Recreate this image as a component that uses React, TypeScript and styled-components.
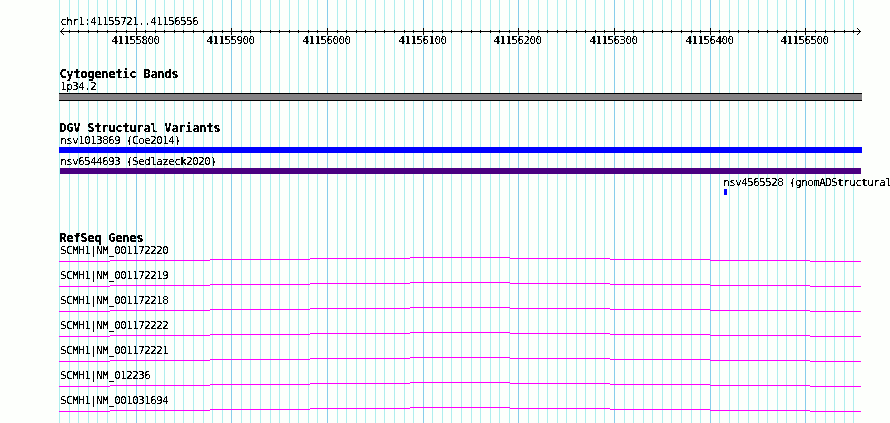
import React from "react";
import styled, { createGlobalStyle, css } from "styled-components";

const REGION_START = 41155721;
const REGION_END = 41156556;
const PAD_LEFT = 60;
const PIXELS_PER_BASE = 800 / (REGION_END - REGION_START + 1);

const toX = (position: number) =>
  Math.round(PAD_LEFT + (position - REGION_START) * PIXELS_PER_BASE);

const ticks: { position: number; x: number; major: boolean }[] = [];
for (let p = 41155720; p <= 41156550; p += 10) {
  ticks.push({ position: p, x: toX(p), major: p % 100 === 0 });
}

const genes = [
  "SCMH1|NM_001172220",
  "SCMH1|NM_001172219",
  "SCMH1|NM_001172218",
  "SCMH1|NM_001172222",
  "SCMH1|NM_001172221",
  "SCMH1|NM_012236",
  "SCMH1|NM_001031694",
];

// x, width and height offset of every piece of the intron arc
const arcSteps = [
  [0, 51, 4],
  [51, 100, 3],
  [151, 100, 2],
  [251, 100, 1],
  [351, 100, 0],
  [451, 100, 1],
  [551, 100, 2],
  [651, 100, 3],
  [751, 51, 4],
];

const GlobalStyle = createGlobalStyle`
  body {
    margin: 0;
    background: #fdfffc;
    overflow: hidden;
  }
`;

const smallFont = css`
  font-family: "DejaVu Sans Mono", monospace;
  font-size: 10.8px;
  letter-spacing: -0.502px;
  filter: url(#crisp);
`;

const Browser = styled.main`
  position: relative;
  box-sizing: border-box;
  width: 890px;
  height: 423px;
  padding: 15px 0 0 59px;
  overflow: hidden;
  background: #fdfffc;
  color: #000;
`;

const Grid = styled.svg`
  position: absolute;
  top: 0;
  left: 0;
`;

const Content = styled.div`
  position: relative;
`;

const Label = styled.div<{ $indent?: number }>`
  ${smallFont}
  height: 13px;
  line-height: 13px;
  padding-left: ${(props) => props.$indent ?? 1.25}px;
  white-space: pre;
`;

const Ruler = styled.svg`
  display: block;
  width: 831px;
  height: 19px;

  text {
    ${smallFont}
  }
`;

const Track = styled.section<{ $gap: number }>`
  margin-top: ${(props) => props.$gap}px;
`;

const TrackTitle = styled.h2`
  height: 12px;
  margin: 0;
  padding-left: 0.5px;
  font-family: "DejaVu Sans Mono", monospace;
  font-size: 11.6px;
  font-weight: 700;
  line-height: 13px;
  letter-spacing: 0.016px;
  white-space: pre;
  filter: url(#crisp);
`;

const Band = styled.div`
  box-sizing: border-box;
  width: 803px;
  height: 8px;
  border: solid #000;
  border-width: 1px 0;
  background: #848284;
`;

const Feature = styled.div`
  height: 21px;
`;

const Bar = styled.div<{ $color: string; $width: number; $indent?: number }>`
  width: ${(props) => props.$width}px;
  height: 6px;
  margin-left: ${(props) => props.$indent ?? 0}px;
  background: ${(props) => props.$color};
`;

const Gene = styled.div`
  height: 25px;
`;

const Arc = styled.svg`
  display: block;
  width: 802px;
  height: 5px;
`;

const FilterDefs = styled.svg`
  position: absolute;
`;

// hard glyph edges, like a bitmap font
const CrispFilter = () => (
  <FilterDefs width="0" height="0">
    <filter id="crisp" x="0" y="-20%" width="100%" height="140%">
      <feComponentTransfer>
        <feFuncA type="discrete" tableValues="0 0 1 1 1" />
      </feComponentTransfer>
    </filter>
  </FilterDefs>
);

const App = () => {
  return (
    <Browser>
      <GlobalStyle />
      <CrispFilter />
      <Grid width="890" height="423" shapeRendering="crispEdges">
        {ticks.map((tick) => (
          <rect
            key={tick.position}
            x={tick.x}
            width="1"
            height="423"
            fill={tick.major ? "#87ceeb" : "#afeeee"}
          />
        ))}
      </Grid>
      <Content>
        <Label>chr1:41155721..41156556</Label>
        <Ruler viewBox="59 28 831 19">
          <g shapeRendering="crispEdges">
            <rect x="60" y="31" width="801" height="1" />
            {ticks.slice(1).map((tick) => (
              <rect
                key={tick.position}
                x={tick.x}
                y={tick.major ? 28 : 30}
                width="1"
                height={tick.major ? 7 : 3}
              />
            ))}
            {[1, 2, 3].map((n) => (
              <React.Fragment key={n}>
                <rect x={60 + n} y={31 - n} width="1" height="1" />
                <rect x={60 + n} y={31 + n} width="1" height="1" />
                <rect x={860 - n} y={31 - n} width="1" height="1" />
                <rect x={860 - n} y={31 + n} width="1" height="1" />
              </React.Fragment>
            ))}
          </g>
          {ticks
            .filter((tick) => tick.major)
            .map((tick) => (
              <text key={tick.position} x={tick.x - 24.5} y="44">
                {tick.position}
              </text>
            ))}
        </Ruler>
        <Track $gap={21}>
          <TrackTitle>Cytogenetic Bands</TrackTitle>
          <Label>1p34.2</Label>
          <Band />
        </Track>
        <Track $gap={21}>
          <TrackTitle>DGV Structural Variants</TrackTitle>
          <Feature>
            <Label>nsv1013869 (Coe2014)</Label>
            <Bar $color="#0000ff" $width={803} />
          </Feature>
          <Feature>
            <Label>nsv6544693 (Sedlazeck2020)</Label>
            <Bar $color="#4b0082" $width={801} $indent={1} />
          </Feature>
          <Feature>
            <Label $indent={664.25}>nsv4565528 (gnomADStructural</Label>
            <Bar $color="#0000ff" $width={3} $indent={665} />
          </Feature>
        </Track>
        <Track $gap={35}>
          <TrackTitle>RefSeq Genes</TrackTitle>
          {genes.map((gene) => (
            <Gene key={gene}>
              <Label>{gene}</Label>
              <Arc shapeRendering="crispEdges">
                {arcSteps.map(([x, width, y]) => (
                  <rect key={x} x={x} y={y} width={width} height="1" fill="#ff00ff" />
                ))}
              </Arc>
            </Gene>
          ))}
        </Track>
      </Content>
    </Browser>
  );
};

export default App;
